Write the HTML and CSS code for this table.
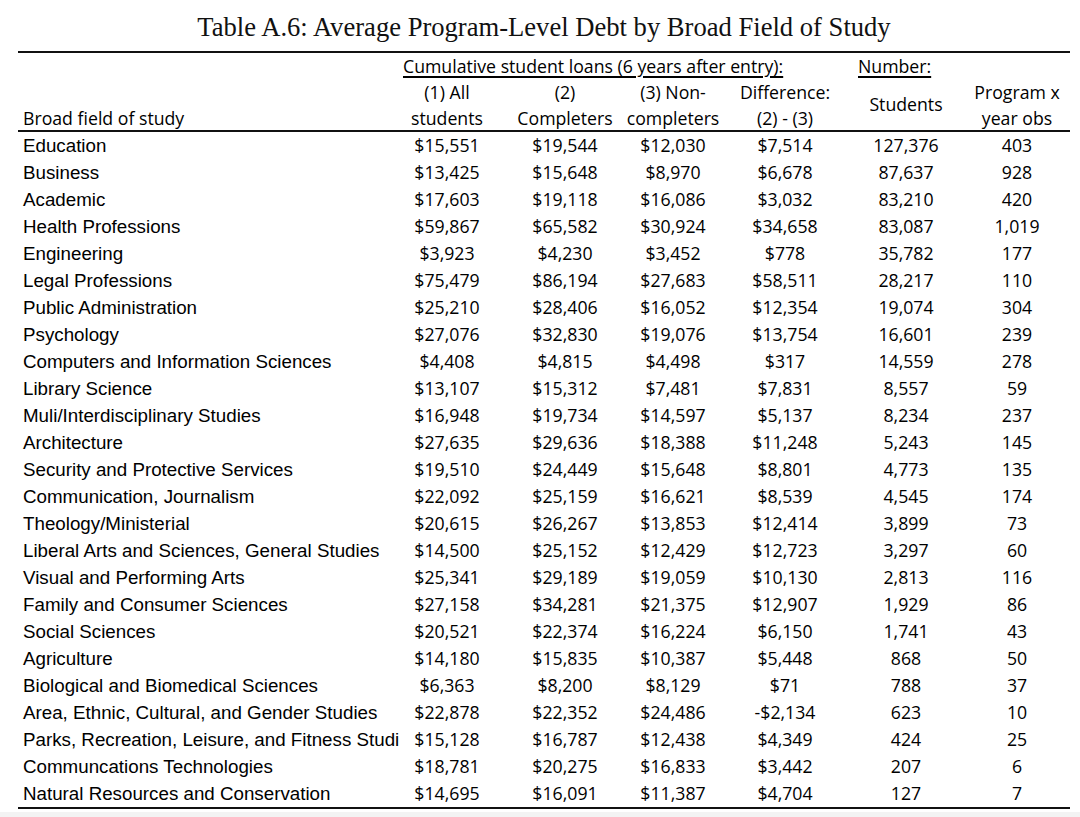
FILE: index.html
```html
<!DOCTYPE html>
<html lang="en">
<head>
<meta charset="utf-8">
<title>Table A.6</title>
<link rel="stylesheet" href="styles.css">
</head>
<body>
<div class="page">
  <h1 class="title">Table A.6: Average Program-Level Debt by Broad Field of Study</h1>
  <div class="table">
    <div class="head">
      <div class="h-group"><span class="ul">Cumulative student loans (6 years after entry):</span></div>
      <div class="h-number"><span class="ul">Number:</span></div>
      <div class="h-label">Broad field of study</div>
      <div class="cell c1 r2">(1) All</div>
      <div class="cell c1 r3">students</div>
      <div class="cell c2 r2">(2)</div>
      <div class="cell c2 r3">Completers</div>
      <div class="cell c3 r2">(3) Non-</div>
      <div class="cell c3 r3">completers</div>
      <div class="cell c4 r2">Difference:</div>
      <div class="cell c4 r3">(2) - (3)</div>
      <div class="cell c5 r23">Students</div>
      <div class="cell c6 r2">Program x</div>
      <div class="cell c6 r3">year obs</div>
    </div>
    <div class="body">
      <div class="row"><div class="label">Education</div><div class="cell">$15,551</div><div class="cell">$19,544</div><div class="cell">$12,030</div><div class="cell">$7,514</div><div class="cell">127,376</div><div class="cell">403</div></div>
      <div class="row"><div class="label">Business</div><div class="cell">$13,425</div><div class="cell">$15,648</div><div class="cell">$8,970</div><div class="cell">$6,678</div><div class="cell">87,637</div><div class="cell">928</div></div>
      <div class="row"><div class="label">Academic</div><div class="cell">$17,603</div><div class="cell">$19,118</div><div class="cell">$16,086</div><div class="cell">$3,032</div><div class="cell">83,210</div><div class="cell">420</div></div>
      <div class="row"><div class="label">Health Professions</div><div class="cell">$59,867</div><div class="cell">$65,582</div><div class="cell">$30,924</div><div class="cell">$34,658</div><div class="cell">83,087</div><div class="cell">1,019</div></div>
      <div class="row"><div class="label">Engineering</div><div class="cell">$3,923</div><div class="cell">$4,230</div><div class="cell">$3,452</div><div class="cell">$778</div><div class="cell">35,782</div><div class="cell">177</div></div>
      <div class="row"><div class="label">Legal Professions</div><div class="cell">$75,479</div><div class="cell">$86,194</div><div class="cell">$27,683</div><div class="cell">$58,511</div><div class="cell">28,217</div><div class="cell">110</div></div>
      <div class="row"><div class="label">Public Administration</div><div class="cell">$25,210</div><div class="cell">$28,406</div><div class="cell">$16,052</div><div class="cell">$12,354</div><div class="cell">19,074</div><div class="cell">304</div></div>
      <div class="row"><div class="label">Psychology</div><div class="cell">$27,076</div><div class="cell">$32,830</div><div class="cell">$19,076</div><div class="cell">$13,754</div><div class="cell">16,601</div><div class="cell">239</div></div>
      <div class="row"><div class="label">Computers and Information Sciences</div><div class="cell">$4,408</div><div class="cell">$4,815</div><div class="cell">$4,498</div><div class="cell">$317</div><div class="cell">14,559</div><div class="cell">278</div></div>
      <div class="row"><div class="label">Library Science</div><div class="cell">$13,107</div><div class="cell">$15,312</div><div class="cell">$7,481</div><div class="cell">$7,831</div><div class="cell">8,557</div><div class="cell">59</div></div>
      <div class="row"><div class="label">Muli/Interdisciplinary Studies</div><div class="cell">$16,948</div><div class="cell">$19,734</div><div class="cell">$14,597</div><div class="cell">$5,137</div><div class="cell">8,234</div><div class="cell">237</div></div>
      <div class="row"><div class="label">Architecture</div><div class="cell">$27,635</div><div class="cell">$29,636</div><div class="cell">$18,388</div><div class="cell">$11,248</div><div class="cell">5,243</div><div class="cell">145</div></div>
      <div class="row"><div class="label">Security and Protective Services</div><div class="cell">$19,510</div><div class="cell">$24,449</div><div class="cell">$15,648</div><div class="cell">$8,801</div><div class="cell">4,773</div><div class="cell">135</div></div>
      <div class="row"><div class="label">Communication, Journalism</div><div class="cell">$22,092</div><div class="cell">$25,159</div><div class="cell">$16,621</div><div class="cell">$8,539</div><div class="cell">4,545</div><div class="cell">174</div></div>
      <div class="row"><div class="label">Theology/Ministerial</div><div class="cell">$20,615</div><div class="cell">$26,267</div><div class="cell">$13,853</div><div class="cell">$12,414</div><div class="cell">3,899</div><div class="cell">73</div></div>
      <div class="row"><div class="label">Liberal Arts and Sciences, General Studies</div><div class="cell">$14,500</div><div class="cell">$25,152</div><div class="cell">$12,429</div><div class="cell">$12,723</div><div class="cell">3,297</div><div class="cell">60</div></div>
      <div class="row"><div class="label">Visual and Performing Arts</div><div class="cell">$25,341</div><div class="cell">$29,189</div><div class="cell">$19,059</div><div class="cell">$10,130</div><div class="cell">2,813</div><div class="cell">116</div></div>
      <div class="row"><div class="label">Family and Consumer Sciences</div><div class="cell">$27,158</div><div class="cell">$34,281</div><div class="cell">$21,375</div><div class="cell">$12,907</div><div class="cell">1,929</div><div class="cell">86</div></div>
      <div class="row"><div class="label">Social Sciences</div><div class="cell">$20,521</div><div class="cell">$22,374</div><div class="cell">$16,224</div><div class="cell">$6,150</div><div class="cell">1,741</div><div class="cell">43</div></div>
      <div class="row"><div class="label">Agriculture</div><div class="cell">$14,180</div><div class="cell">$15,835</div><div class="cell">$10,387</div><div class="cell">$5,448</div><div class="cell">868</div><div class="cell">50</div></div>
      <div class="row"><div class="label">Biological and Biomedical Sciences</div><div class="cell">$6,363</div><div class="cell">$8,200</div><div class="cell">$8,129</div><div class="cell">$71</div><div class="cell">788</div><div class="cell">37</div></div>
      <div class="row"><div class="label">Area, Ethnic, Cultural, and Gender Studies</div><div class="cell">$22,878</div><div class="cell">$22,352</div><div class="cell">$24,486</div><div class="cell">-$2,134</div><div class="cell">623</div><div class="cell">10</div></div>
      <div class="row"><div class="label">Parks, Recreation, Leisure, and Fitness Studi</div><div class="cell">$15,128</div><div class="cell">$16,787</div><div class="cell">$12,438</div><div class="cell">$4,349</div><div class="cell">424</div><div class="cell">25</div></div>
      <div class="row"><div class="label">Communcations Technologies</div><div class="cell">$18,781</div><div class="cell">$20,275</div><div class="cell">$16,833</div><div class="cell">$3,442</div><div class="cell">207</div><div class="cell">6</div></div>
      <div class="row"><div class="label">Natural Resources and Conservation</div><div class="cell">$14,695</div><div class="cell">$16,091</div><div class="cell">$11,387</div><div class="cell">$4,704</div><div class="cell">127</div><div class="cell">7</div></div>
    </div>
  </div>
</div>
</body>
</html>
```
FILE: styles.css
```css
html {
  background: #f3f3f3;
}
body {
  margin: 0;
  color: #000;
  font-family: "Open Sans", "Noto Sans", sans-serif;
  font-size: 17.7px;
}
.page {
  background: #fff;
  padding: 10px 10px 3px 18px;
  width: 1052px;
}
.title {
  margin: 0 0 7px;
  font-family: "Liberation Serif", serif;
  font-weight: normal;
  font-size: 26.6px;
  line-height: 34px;
  text-align: center;
  color: #111;
}
.table {
  border-top: 2px solid #111;
  border-bottom: 2px solid #111;
}
.head,
.row {
  display: grid;
  grid-template-columns: 370px 118px 118px 98px 126px 116px 106px;
}
.head {
  grid-template-rows: 26px 27px 24px;
  border-bottom: 2px solid #111;
}
.row {
  height: 27px;
}
.cell,
.h-group,
.h-number,
.h-label,
.label {
  display: flex;
  align-items: center;
  white-space: nowrap;
  line-height: 27px;
}
.cell {
  justify-content: center;
}
.h-group {
  grid-column: 2 / 6;
  grid-row: 1;
  padding-left: 15px;
}
.h-number {
  grid-column: 6 / 7;
  grid-row: 1;
  padding-left: 10px;
}
.ul {
  text-decoration: underline;
  text-decoration-thickness: 1.5px;
  text-underline-offset: 3px;
}
.h-label {
  grid-column: 1;
  grid-row: 3;
  padding-left: 5px;
}
.c1 { grid-column: 2; }
.c2 { grid-column: 3; }
.c3 { grid-column: 4; }
.c4 { grid-column: 5; }
.c5 { grid-column: 6; }
.c6 { grid-column: 7; }
.r2 { grid-row: 2; }
.r3 { grid-row: 3; }
.r23 { grid-row: 2 / 4; }
.label {
  padding-left: 5px;
  font-family: "Liberation Sans", Arial, sans-serif;
  font-size: 18.75px;
}
```
